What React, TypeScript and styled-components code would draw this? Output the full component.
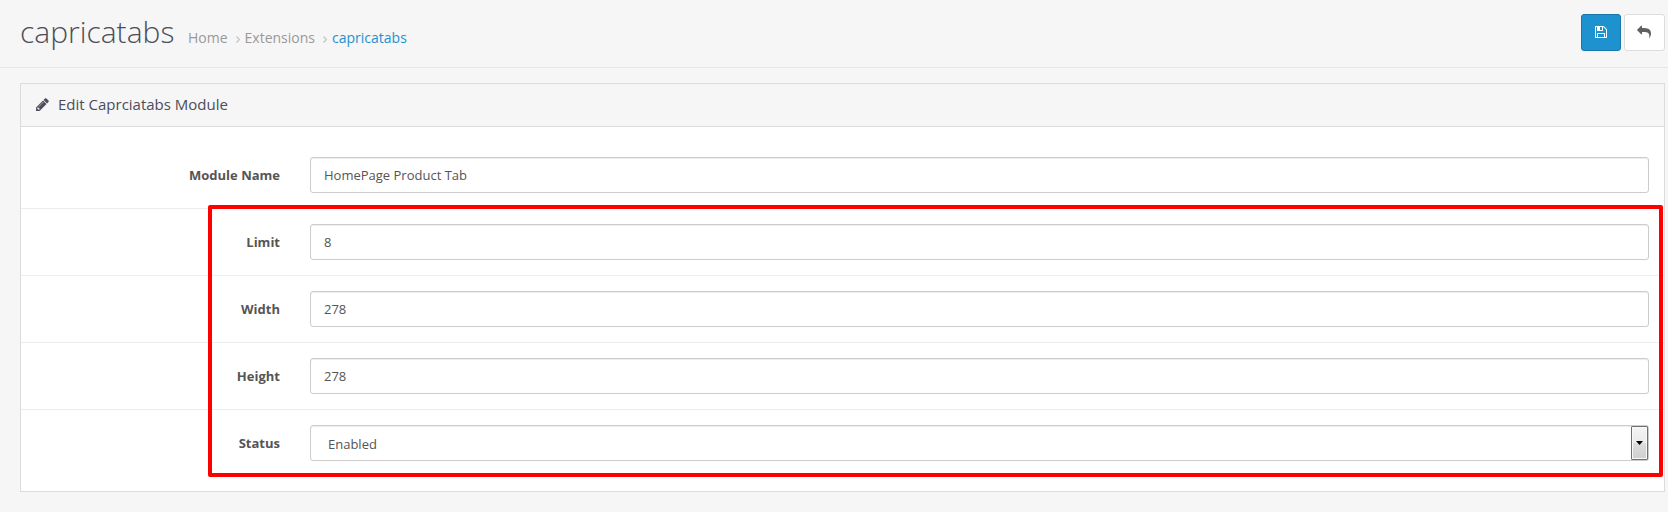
import React from 'react';
import styled, { createGlobalStyle, css } from 'styled-components';

const GlobalStyle = createGlobalStyle`
  *, *::before, *::after { box-sizing: border-box; }
  body {
    margin: 0;
    background: #f6f6f6;
    color: #555;
    font-family: "Open Sans", "Noto Sans", sans-serif;
    font-size: 13px;
    line-height: 20px;
  }
`;

const Page = styled.div`
  position: relative;
  height: 512px;
  overflow: hidden;
`;

const PageHeader = styled.header`
  display: flex;
  justify-content: space-between;
  align-items: flex-start;
  height: 68px;
  padding: 14px 3px 0 20px;
  border-bottom: 1px solid #e7e7e7;
`;

const TitleGroup = styled.div`
  display: flex;
  align-items: baseline;
`;

const Title = styled.h1`
  margin: 0;
  width: 168px;
  font-size: 30px;
  font-weight: 300;
  line-height: 36px;
  color: #4c4d5a;
  white-space: nowrap;
`;

const Breadcrumb = styled.nav`
  display: flex;
  align-items: baseline;
  font-size: 14px;
`;

const Crumb = styled.a<{ $current?: boolean }>`
  color: ${(p) => (p.$current ? '#1e91cf' : '#999')};
`;

const Chevron = styled.svg`
  display: block;
  width: 4px;
  height: 7px;
  margin: 0 5px 0 8px;
  fill: none;
  stroke: #c2c2c2;
  stroke-width: 1.1;
`;

const Actions = styled.div`
  display: flex;
  gap: 3px;
`;

const ActionButton = styled.button<{ $primary?: boolean }>`
  display: flex;
  align-items: center;
  justify-content: center;
  width: ${(p) => (p.$primary ? 40 : 41)}px;
  height: 37px;
  padding: 0 1px 1px 0;
  border: 1px solid ${(p) => (p.$primary ? '#1978ab' : '#ddd')};
  border-radius: 3px;
  background: ${(p) => (p.$primary ? '#1e91cf' : '#fff')};
  color: ${(p) => (p.$primary ? '#fff' : '#606060')};
  ${(p) => p.$primary && 'padding: 0 0 1px;'}
`;

const Icon = styled.svg<{ $size: number }>`
  display: block;
  flex: none;
  width: ${(p) => p.$size}px;
  height: ${(p) => p.$size}px;
  fill: currentColor;
`;

const Panel = styled.section`
  margin: 15px 3px 0 20px;
  border: 1px solid #dcdcdc;
  background: #fff;
`;

const PanelHeading = styled.div`
  display: flex;
  align-items: center;
  gap: 8px;
  height: 43px;
  padding: 0 14px 2px;
  border-bottom: 1px solid #dcdcdc;
  background: #f6f6f6;
  color: #4c4d5a;
  font-size: 15px;
`;

const PanelTitle = styled.h3`
  margin: 0;
  font-size: 15px;
  font-weight: 400;
  line-height: 20px;
`;

const Form = styled.form`
  padding: 15px 0;
`;

const FormRow = styled.div`
  display: grid;
  grid-template-columns: 259px 1fr;
  column-gap: 30px;
  align-items: center;
  padding: 15px 15px 15px 0;

  & + & {
    border-top: 1px solid #ededed;
  }
`;

const Label = styled.label`
  text-align: right;
  font-weight: 700;
`;

const control = css`
  width: 100%;
  height: 36px;
  border: 1px solid #ccc;
  border-radius: 3px;
  background: #fff;
  box-shadow: inset 0 1px 1px rgba(0, 0, 0, 0.075);
  color: #555;
`;

const Input = styled.input`
  ${control}
  padding: 0 13px;
  font: inherit;
`;

const Select = styled.div`
  ${control}
  display: flex;
  align-items: center;
  justify-content: space-between;
  padding-left: 17px;
`;

const SelectValue = styled.span`
  padding-top: 2px;
`;

const SelectArrow = styled.span`
  display: flex;
  align-items: center;
  justify-content: center;
  width: 17px;
  height: 34px;
  border: 1px solid #707070;
  border-radius: 1px;
  background: linear-gradient(#f2f2f2 0 10%, #ebebeb 50%, #ddd 50%, #cfcfcf);
  box-shadow: inset 0 0 0 1px #f8f8f8;
`;

const Highlight = styled.div`
  position: absolute;
  left: 208px;
  top: 205px;
  width: 1455px;
  height: 272px;
  border: 4px solid #f00;
  border-radius: 2px;
  pointer-events: none;
`;

const paths = {
  save: 'M512 1536h768v-384h-768v384zm896 0h128v-896q0-14-10-38.5t-20-34.5l-281-281q-10-10-34-20t-39-10v416q0 40-28 68t-68 28h-576q-40 0-68-28t-28-68v-416h-128v1280h128v-416q0-40 28-68t68-28h832q40 0 68 28t28 68v416zm-384-928v-320q0-13-9.5-22.5t-22.5-9.5h-192q-13 0-22.5 9.5t-9.5 22.5v320q0 13 9.5 22.5t22.5 9.5h192q13 0 22.5-9.5t9.5-22.5zm640 32v928q0 40-28 68t-68 28h-1344q-40 0-68-28t-28-68v-1344q0-40 28-68t68-28h928q40 0 88 20t76 48l280 280q28 28 48 76t20 88z',
  reply: 'M1792 1120q0 166-127 451-3 7-10.5 24t-13.5 30-13 22q-12 17-28 17-15 0-23.5-10t-8.5-25q0-9 2.5-26.5t2.5-23.5q5-68 5-123 0-101-17.5-181t-48.5-138.5-80-101-105.5-69.5-133-42.5-154-21.5-175.5-6h-224v256q0 26-19 45t-45 19-45-19l-512-512q-19-19-19-45t19-45l512-512q19-19 45-19t45 19 19 45v256h224q713 0 875 403 53 134 53 333z',
  pencil: 'M491 1536l91-91-235-235-91 91v107h128v128h107zm523-928q0-22-22-22-10 0-17 7l-542 542q-7 7-7 17 0 22 22 22 10 0 17-7l542-542q7-7 7-17zm-54-192l416 416-832 832h-416v-416zm683 96q0 53-37 90l-166 166-416-416 166-165q36-38 90-38 53 0 91 38l235 234q37 39 37 91z',
};

function Glyph({ name, size = 14 }: { name: keyof typeof paths; size?: number }) {
  return (
    <Icon $size={size} viewBox="0 0 1792 1792" aria-hidden="true">
      <path d={paths[name]} />
    </Icon>
  );
}

function Separator() {
  return (
    <Chevron viewBox="0 0 4 7" aria-hidden="true">
      <path d="M0.5 0.5L3.4 3.5L0.5 6.5" />
    </Chevron>
  );
}

const fields = [
  { id: 'name', label: 'Module Name', value: 'HomePage Product Tab' },
  { id: 'limit', label: 'Limit', value: '8' },
  { id: 'width', label: 'Width', value: '278' },
  { id: 'height', label: 'Height', value: '278' },
];

export default function App() {
  return (
    <Page>
      <GlobalStyle />
      <PageHeader>
        <TitleGroup>
          <Title>capricatabs</Title>
          <Breadcrumb>
            <Crumb>Home</Crumb>
            <Separator />
            <Crumb>Extensions</Crumb>
            <Separator />
            <Crumb $current>capricatabs</Crumb>
          </Breadcrumb>
        </TitleGroup>
        <Actions>
          <ActionButton $primary aria-label="Save">
            <Glyph name="save" />
          </ActionButton>
          <ActionButton aria-label="Back">
            <Glyph name="reply" />
          </ActionButton>
        </Actions>
      </PageHeader>
      <Panel>
        <PanelHeading>
          <Glyph name="pencil" size={15} />
          <PanelTitle>Edit Caprciatabs Module</PanelTitle>
        </PanelHeading>
        <Form>
          {fields.map((field) => (
            <FormRow key={field.id}>
              <Label htmlFor={field.id}>{field.label}</Label>
              <Input id={field.id} defaultValue={field.value} />
            </FormRow>
          ))}
          <FormRow>
            <Label>Status</Label>
            <Select>
              <SelectValue>Enabled</SelectValue>
              <SelectArrow>
                <svg width="7" height="4" viewBox="0 0 7 4" aria-hidden="true">
                  <path d="M0 0h7L3.5 4z" fill="#000" />
                </svg>
              </SelectArrow>
            </Select>
          </FormRow>
        </Form>
      </Panel>
      <Highlight />
    </Page>
  );
}
